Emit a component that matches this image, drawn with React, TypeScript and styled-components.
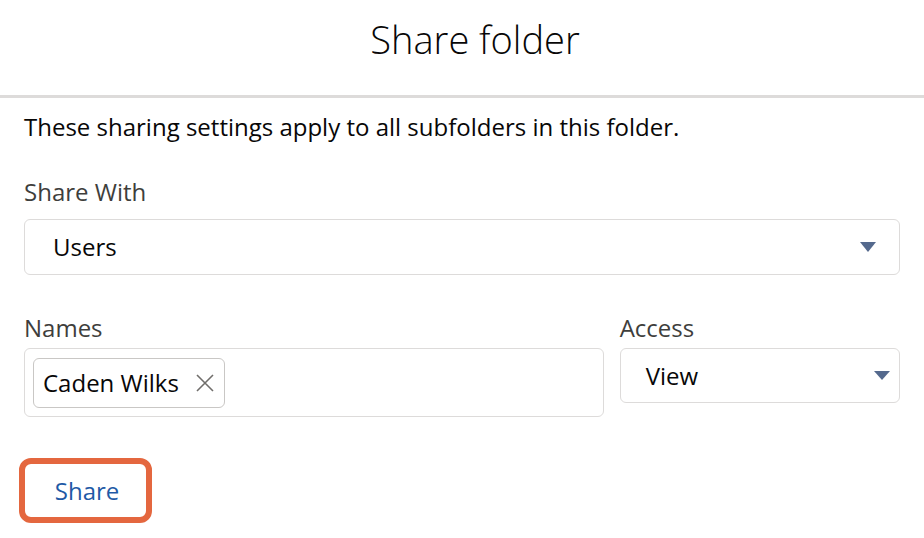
import React from "react";
import styled, { createGlobalStyle } from "styled-components";

const GlobalStyle = createGlobalStyle`
  body {
    margin: 0;
    background: #fff;
    font-family: "Open Sans", "Liberation Sans", sans-serif;
    color: #080707;
  }
`;

const Modal = styled.div`
  width: 924px;
  height: 538px;
  background: #fff;
  overflow: hidden;
`;

const Header = styled.header`
  height: 98px;
  box-sizing: border-box;
  padding: 15px 0 0 26px;
  border-bottom: 3px solid #dddbda;
  text-align: center;
`;

const Title = styled.h2`
  margin: 0;
  font-size: 38px;
  line-height: 48px;
  font-weight: 300;
  color: #080707;
`;

const Body = styled.div`
  padding: 13px 24px 0 24px;
  display: flex;
  flex-direction: column;
`;

const Intro = styled.p`
  margin: 0;
  font-size: 24px;
  line-height: 32px;
`;

const Field = styled.div<{ $grow?: number; $mt?: number }>`
  display: flex;
  flex-direction: column;
  flex: ${(p) => p.$grow ?? 1} 1 0;
  margin-top: ${(p) => p.$mt ?? 0}px;
  min-width: 0;
`;

const Label = styled.label<{ $gap: number }>`
  font-size: 24px;
  line-height: 32px;
  color: #3e3e3c;
  margin-bottom: ${(p) => p.$gap}px;
`;

const Select = styled.div<{ $h: number; $pl: number; $pr: number }>`
  height: ${(p) => p.$h}px;
  box-sizing: border-box;
  border: 1px solid #dddbda;
  border-radius: 6px;
  display: flex;
  align-items: center;
  justify-content: space-between;
  padding: 0 ${(p) => p.$pr}px 0 ${(p) => p.$pl}px;
  font-size: 24px;
  line-height: 32px;
  color: #080707;
`;

const Caret = styled.span<{ $h: number }>`
  width: 0;
  height: 0;
  border-left: 8px solid transparent;
  border-right: 8px solid transparent;
  border-top: ${(p) => p.$h}px solid #54698d;
`;

const Row = styled.div`
  display: flex;
  gap: 16px;
  margin-top: 37px;
  align-items: flex-start;
`;

const PillBox = styled.div`
  height: 69px;
  box-sizing: border-box;
  border: 1px solid #dddbda;
  border-radius: 6px;
  padding: 0 8px;
  display: flex;
  align-items: center;
`;

const Pill = styled.span`
  height: 50px;
  box-sizing: border-box;
  border: 1px solid #c9c7c5;
  border-radius: 6px;
  display: inline-flex;
  align-items: center;
  gap: 17px;
  padding: 0 10px 0 9px;
  font-size: 24px;
  line-height: 32px;
  color: #080707;
`;

const Remove = styled.svg`
  width: 18px;
  height: 18px;
  display: block;
`;

const Footer = styled.div`
  margin-top: 41px;
  margin-left: -5px;
`;

const ShareButton = styled.button`
  width: 133px;
  height: 65px;
  box-sizing: border-box;
  border: 6px solid #e4673f;
  border-radius: 12px;
  background: #fff;
  color: #1f5aa6;
  font-family: inherit;
  font-size: 24px;
  line-height: 32px;
  padding: 0 0 0 3px;
  cursor: pointer;
`;

export default function App() {
  return (
    <>
      <GlobalStyle />
      <Modal>
        <Header>
          <Title>Share folder</Title>
        </Header>
        <Body>
          <Intro>These sharing settings apply to all subfolders in this folder.</Intro>
          <Field $mt={33}>
            <Label $gap={11}>Share With</Label>
            <Select $h={56} $pl={28} $pr={23}>
              <span>Users</span>
              <Caret $h={10} />
            </Select>
          </Field>
          <Row>
            <Field $grow={579}>
              <Label $gap={4}>Names</Label>
              <PillBox>
                <Pill>
                  Caden Wilks
                  <Remove viewBox="0 0 18 18">
                    <path d="M1 1 L17 17 M17 1 L1 17" stroke="#706e6b" strokeWidth="1.6" fill="none" />
                  </Remove>
                </Pill>
              </PillBox>
            </Field>
            <Field $grow={280}>
              <Label $gap={4}>Access</Label>
              <Select $h={55} $pl={25} $pr={9}>
                <span>View</span>
                <Caret $h={9} />
              </Select>
            </Field>
          </Row>
          <Footer>
            <ShareButton>Share</ShareButton>
          </Footer>
        </Body>
      </Modal>
    </>
  );
}
